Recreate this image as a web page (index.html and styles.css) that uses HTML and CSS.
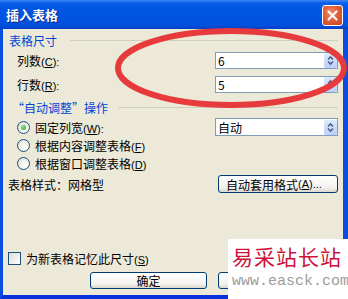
FILE: index.html
```html
<!DOCTYPE html>
<html lang="zh-CN">
<head>
<meta charset="UTF-8">
<title>插入表格</title>
<link rel="stylesheet" href="styles.css">
</head>
<body>

<div class="dlg">
    <div class="titlebar">
        <span class="title">插入表格</span>
        <span class="close">
            <svg width="13" height="13" viewBox="0 0 13 13"><path d="M2.5 2.5 L10.5 10.5 M10.5 2.5 L2.5 10.5" stroke="#fff" stroke-width="2.2" stroke-linecap="round"/></svg>
        </span>
    </div>

    <div class="client">
        <div class="grp"><span>表格尺寸</span><i class="rule"></i></div>

        <div class="row">
            <span class="lbl">列数<span class="key">(<u>C</u>):</span></span>
            <div class="spin">
                <span class="val">6</span>
                <span class="spinbtn"><svg width="13" height="15" viewBox="0 0 13 15"><path d="M4 6.5 L6.5 4 L9 6.5" stroke="#4d6185" stroke-width="1.6" fill="none"/><path d="M4 8.5 L6.5 11 L9 8.5" stroke="#4d6185" stroke-width="1.6" fill="none"/></svg></span>
            </div>
        </div>
        <div class="row">
            <span class="lbl">行数<span class="key">(<u>R</u>):</span></span>
            <div class="spin">
                <span class="val">5</span>
                <span class="spinbtn"><svg width="13" height="15" viewBox="0 0 13 15"><path d="M4 6.5 L6.5 4 L9 6.5" stroke="#4d6185" stroke-width="1.6" fill="none"/></svg></span>
            </div>
        </div>

        <div class="grp grp2"><span>“自动调整”操作</span><i class="rule"></i></div>

        <div class="opt first">
            <span class="radio on"></span>
            <span class="lbl">固定列宽<span class="key">(<u>W</u>):</span></span>
            <div class="spin">
                <span class="val">自动</span>
                <span class="spinbtn"><svg width="13" height="15" viewBox="0 0 13 15"><path d="M4 6.5 L6.5 4 L9 6.5" stroke="#4d6185" stroke-width="1.6" fill="none"/><path d="M4 8.5 L6.5 11 L9 8.5" stroke="#4d6185" stroke-width="1.6" fill="none"/></svg></span>
            </div>
        </div>
        <div class="opt">
            <span class="radio"></span>
            <span class="lbl">根据内容调整表格<span class="key">(<u>F</u>)</span></span>
        </div>
        <div class="opt">
            <span class="radio"></span>
            <span class="lbl">根据窗口调整表格<span class="key">(<u>D</u>)</span></span>
        </div>

        <div class="style-row">
            <span class="lbl">表格样式：网格型</span>
            <span class="btn wide">自动套用格式<span class="key">(<u>A</u>)...</span></span>
        </div>

        <div class="spacer"></div>

        <div class="check-row">
            <span class="check"></span>
            <span class="lbl">为新表格记忆此尺寸<span class="key">(<u>S</u>)</span></span>
        </div>

        <div class="btn-row">
            <span class="btn">确定</span>
            <span class="btn"></span>
        </div>
    </div>

    <svg class="mark" width="348" height="299" viewBox="0 0 348 299">
        <ellipse cx="231" cy="68" rx="113" ry="37" fill="none" stroke="#e63a3c" stroke-width="6"/>
    </svg>

    <div class="wm">
        <div class="wm-cn">易采站长站</div>
        <div class="wm-en">www.easck.com</div>
    </div>
</div>

</body>
</html>
```

FILE: styles.css
```css
body {margin:0; background:#fff;}

.dlg {
    position: relative;
    width: 348px;
    height: 299px;
    overflow: hidden;
    display: flex;
    flex-direction: column;
    font-family: "Noto Sans CJK SC", sans-serif;
    font-size: 12px;
    color: #000;
}

/* title bar */
.titlebar {
    flex: none;
    height: 29px;
    display: flex;
    align-items: center;
    justify-content: space-between;
    padding: 0 5px 0 6px;
    background: linear-gradient(#3d8af7 0, #0a5fe8 3px, #0056e3 8px, #0054e3 60%, #0250dd 88%, #0340c6 100%);
}
.title {color:#fff; font-weight:bold; font-size:13px; text-shadow:1px 1px 0 #0a2a8c;}
.close {
    width: 21px;
    height: 21px;
    margin-top: 2px;
    box-sizing: border-box;
    border: 1px solid #fff;
    border-radius: 3px;
    display: flex;
    align-items: center;
    justify-content: center;
    background: radial-gradient(circle at 40% 35%, #f08a62 0, #e0603a 45%, #c4421e 100%);
}
.close svg {display:block;}

/* client area */
.client {
    flex: 1;
    display: flex;
    flex-direction: column;
    padding: 3px 5px 6px 5px;
    background: #ece9d8;
    border-left: 3px solid #0a4ee0;
    border-right: 5px solid #0a4ee0;
    border-bottom: 4px solid #0831d9;
}

.key {font-family:"Liberation Sans", sans-serif; font-size:11px;}

.grp {height:16px; display:flex; align-items:center; color:#0046d5; padding-left:1px;}
.grp .rule {flex:1; height:1px; background:#d0d0bf; margin-left:13px;}
.grp2 {margin-top:3px; padding-left:4px;}
.grp2 .rule {margin-left:10px;}

.row {height:24px; display:flex; align-items:center; padding-left:9px;}
.lbl {flex:1; white-space:nowrap;}

.spin {
    width: 123px;
    height: 17px;
    box-sizing: border-box;
    border: 1px solid #7f9db9;
    background: #fff;
    display: flex;
    align-items: center;
    padding-left: 2px;
}
.spin .val {flex:1;}
.spinbtn {
    width: 13px;
    height: 15px;
    border-radius: 2px;
    background: linear-gradient(#dde8fd, #bccffa);
}
.spinbtn svg {display:block;}

.opt {height:18px; display:flex; align-items:center; padding-left:9px;}
.opt.first {margin-top:3px;}
.opt .spin {height:18px;}
.radio {
    width: 13px;
    height: 13px;
    box-sizing: border-box;
    margin-right: 5px;
    border: 1px solid #1c5180;
    border-radius: 50%;
    background: radial-gradient(circle at 65% 65%, #fff 0, #f1efe6 50%, #d6d3c6 100%);
    display: flex;
    align-items: center;
    justify-content: center;
}
.radio.on::after {
    content: "";
    width: 5px;
    height: 5px;
    border-radius: 50%;
    background: radial-gradient(circle at 35% 35%, #8ee28e, #21a121);
}

.style-row {height:18px; margin-top:3px; display:flex; align-items:center;}

.btn {
    width: 117px;
    height: 17px;
    box-sizing: border-box;
    border: 1px solid #003c74;
    border-radius: 3px;
    background: linear-gradient(#ffffff, #f4f3ee 70%, #dcd8cd);
    display: flex;
    align-items: center;
    justify-content: center;
    white-space: nowrap;
}
.btn.wide {width:120px; height:18px; justify-content:flex-start; padding-left:7px;}

.spacer {flex:1;}

.check-row {height:16px; display:flex; align-items:center;}
.check {
    width: 13px;
    height: 13px;
    box-sizing: border-box;
    margin-right: 5px;
    border: 1px solid #1c5180;
    background: linear-gradient(135deg, #dcdcd5, #fff);
}

.btn-row {margin-top:6px; display:flex; gap:11px; padding-left:82px;}

/* red marker ellipse drawn over the dialog */
.mark {position:absolute; left:0; top:0; pointer-events:none;}

/* watermark */
.wm {
    position: absolute;
    left: 228px;
    top: 239px;
    width: 120px;
    height: 60px;
    background: #fff;
    padding-left: 4px;
    box-sizing: border-box;
}
.wm-cn {
    margin-top: 5px;
    color: #cc1238;
    font-family: "Noto Sans CJK SC", serif;
    font-size: 21px;
    line-height: 24px;
    letter-spacing: 1px;
    white-space: nowrap;
}
.wm-en {
    margin-top: 6px;
    color: #9c9c9c;
    font-family: "Liberation Mono", monospace;
    font-size: 15px;
    line-height: 16px;
    white-space: nowrap;
}
```
